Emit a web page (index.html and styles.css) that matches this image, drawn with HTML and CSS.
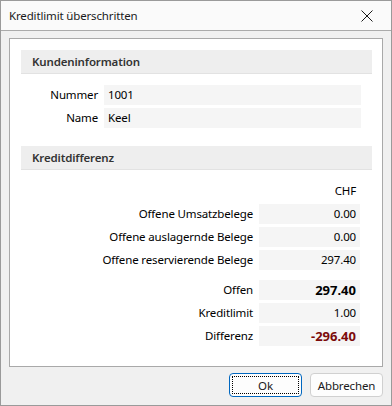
FILE: index.html
```html
<!DOCTYPE html>
<html lang="de">
<head>
    <meta charset="UTF-8">
    <title>Kreditlimit überschritten</title>
    <link rel="stylesheet" href="styles.css">
</head>
<body>
    <div class="window">
        <div class="titlebar">
            <span class="title">Kreditlimit überschritten</span>
            <svg class="close" width="12" height="12" viewBox="0 0 12 12">
                <path d="M0.5 0.5 L11.5 11.5 M11.5 0.5 L0.5 11.5" stroke="#1a1a1a" stroke-width="1" fill="none"/>
            </svg>
        </div>

        <div class="content">
            <div class="panel">
                <div class="section-head">Kundeninformation</div>
                <div class="fields customer">
                    <span class="label">Nummer</span>
                    <span class="value left">1001</span>
                    <span class="label">Name</span>
                    <span class="value left">Keel</span>
                </div>

                <div class="section-head second">Kreditdifferenz</div>
                <div class="fields credit">
                    <span></span>
                    <span class="currency">CHF</span>
                    <span class="label">Offene Umsatzbelege</span>
                    <span class="value">0.00</span>
                    <span class="label">Offene auslagernde Belege</span>
                    <span class="value">0.00</span>
                    <span class="label">Offene reservierende Belege</span>
                    <span class="value">297.40</span>

                    <span class="label spaced">Offen</span>
                    <span class="value spaced strong">297.40</span>
                    <span class="label">Kreditlimit</span>
                    <span class="value">1.00</span>
                    <span class="label">Differenz</span>
                    <span class="value strong negative">-296.40</span>
                </div>
            </div>

            <div class="buttons">
                <button class="btn default"><span class="focus">Ok</span></button>
                <button class="btn">Abbrechen</button>
            </div>
        </div>
    </div>
</body>
</html>
```

FILE: styles.css
```css
body { margin: 0; font-family: "Noto Sans", "Open Sans", sans-serif; font-size: 11.5px; letter-spacing: -0.15px; color: #000; }
.window { width: 390px; height: 404px; border: 1px solid #9a9a9a; background: #f0f0f0; display: flex; flex-direction: column; }
.titlebar { height: 29px; background: #fafafa; border-bottom: 1px solid #aaaaaa; display: flex; align-items: center; justify-content: space-between; padding: 0 18px 0 8px; }
.title { font-size: 11.5px; color: #1a1a1a; }
.close { display: block; }
.content { flex: 1; padding: 7px 8px 8px 8px; display: flex; flex-direction: column; }
.panel { background: #fff; border: 1px solid #a9a9a9; padding: 11px 10px 20px 11px; }
.section-head { height: 23px; background: #eeeeee; border-bottom: 1px solid #e2e2e2; font-weight: 600; color: #333; padding-left: 11px; line-height: 23px; }
.section-head.second { margin-top: 18px; }
.fields { display: grid; row-gap: 3px; column-gap: 6px; margin-top: 11px; }
.customer { grid-template-columns: 77px 257px; }
.credit { grid-template-columns: 232px 101px; }
.label { text-align: right; line-height: 20px; height: 20px; }
.value { background: #f5f5f5; height: 20px; line-height: 20px; text-align: right; padding-right: 4px; }
.value.left { text-align: left; padding-left: 4px; padding-right: 0; }
.currency { text-align: right; padding-right: 4px; line-height: 20px; }
.spaced { margin-top: 7px; }
.strong { font-weight: bold; font-size: 13px; letter-spacing: 0; }
.negative { color: #7b0a0a; }
.buttons { display: flex; justify-content: flex-end; gap: 8px; margin-top: 6px; }
.btn { width: 73px; height: 24px; font-family: inherit; font-size: 11.5px; letter-spacing: -0.15px; background: #fdfdfd; border: 1px solid #d0d0d0; border-radius: 4px; padding: 0; color: #1a1a1a; }
.btn.default { border-color: #0067c0; padding: 2px; }
.focus { display: flex; align-items: center; justify-content: center; height: 100%; border: 1px dotted #000; box-sizing: border-box; }
```
